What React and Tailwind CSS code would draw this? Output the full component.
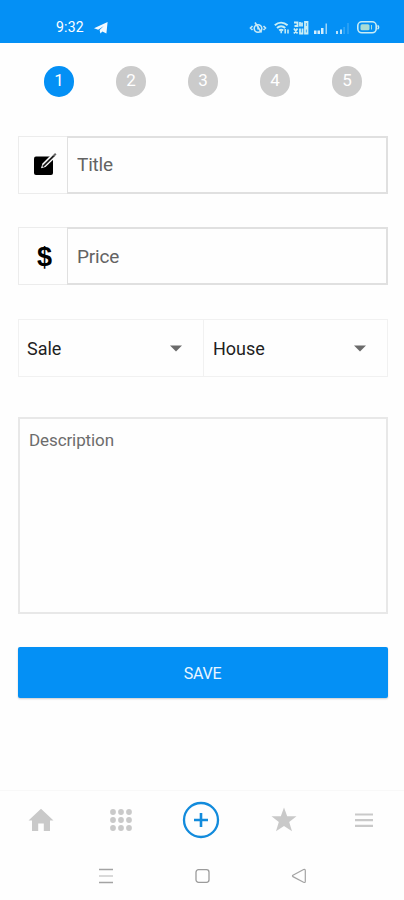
import React, { useState } from 'react';

const STEPS = [1, 2, 3, 4, 5];

const StatusBar = () => (
    <div className="h-[43px] flex-shrink-0 bg-[#0490f5] flex items-start pt-[19px] pl-[56px] pr-[24px] text-white">
        <span className="w-[29px] text-[14px] leading-[17px] tracking-[0.2px] whitespace-nowrap">9:32</span>
        <svg className="ml-[9px] mt-[3px]" width="15" height="12" viewBox="0 0 15 12" fill="#f2f9ff">
            <path d="M0 6.2 13.6 0 12.4 11.5 8.4 9.4 6.4 11.4 5.6 8 9.8 4 4.2 7.8Z" />
        </svg>

        <div className="ml-auto flex items-start">
            {/* Vibrate */}
            <svg className="mt-[2px]" width="18" height="14" viewBox="0 0 18 14" fill="none" stroke="#c9e9f5" strokeWidth="1.6">
                <path d="M3.5 5 1.5 7l2 2M14.5 5l2 2-2 2" />
                <circle cx="9" cy="7.5" r="3.8" />
                <path d="M6 1.5 12.5 11.5M9 5v3.5" />
            </svg>
            {/* Wifi */}
            <svg className="ml-[7px] mt-[2px]" width="16" height="14" viewBox="0 0 16 14" fill="none" stroke="#c9eef5" strokeWidth="2">
                <path d="M.8 4.2C4.6.8 9.6.8 13.6 4.2M3 7c2.4-2.2 5.8-2.2 8.2 0M5.2 9.6c1.2-1.1 2.8-1.1 4 0" />
                <path d="M11.2 8v4.5M14 8.5v4M7.2 10v2.2" strokeWidth="1.5" />
            </svg>
            {/* Network speed */}
            <svg className="ml-[3px] mt-[2px]" width="16" height="14" viewBox="0 0 16 14" fill="none" stroke="#c9eef5" strokeWidth="1.8">
                <path d="M1 1.5h3.5V5H1.5M7 1v4.5M9 1.5v4M1 7.5l3.5 5M4.5 7.5 1 12.5M7 7.5v5h2.5v-5M12 1h2.5v5H12zM12 7.5h2.5v5H12z" />
            </svg>
            <svg className="ml-[5px] mt-[3px]" width="16" height="12" viewBox="0 0 16 12">
                <path d="M0 8.5h2.5V12H0zM3.5 8.5H6V12H3.5zM7 6h2.500v6H7z" fill="#d5eefc" />
                <path d="M11.5 1.5H13V12h-1.5z" fill="#9dd4f8" />
            </svg>
            <svg className="ml-[5px] mt-[3px]" width="16" height="12" viewBox="0 0 16 12">
                <path d="M1 9h2v3H1zM5 7.5h2V12H5z" fill="#b9e2fb" />
                <path d="M8.5 5h1.2v7H8.5zM12.5 1h1v11h-1z" fill="#48aef5" />
            </svg>
            {/* Battery */}
            <svg className="ml-[6px] mt-[2px]" width="23" height="13" viewBox="0 0 23 13" fill="none">
                <rect x=".8" y=".8" width="18.4" height="11" rx="4" stroke="#c9ecf5" strokeWidth="1.6" />
                <path d="M20.5 4.5c1.5.8 1.5 2.8 0 3.6" stroke="#c9ecf5" strokeWidth="1.5" />
                <rect x="3.5" y="3.3" width="9" height="6" rx="1.5" fill="#a9dcd6" />
                <path d="M14.5 4v4.5" stroke="#a9dcd6" />
            </svg>
        </div>
    </div>
);

const Field = ({ icon, placeholder, className }) => {
    const [value, setValue] = useState('');

    return (
        <div className="flex h-[58px]">
            <div className="w-[49px] flex-shrink-0 border border-r-0 border-[#ececec] flex items-center justify-center">
                {icon}
            </div>
            <input
                className={`flex-1 min-w-0 border-2 border-l border-[#e0e0e0] pl-[9px] text-[19px] tracking-[-0.2px] text-[#333] placeholder:text-[#636363] placeholder:opacity-100 focus:outline-none ${className}`}
                value={value}
                onChange={(e) => setValue(e.target.value)}
                placeholder={placeholder}
            />
        </div>
    );
};

const Dropdown = ({ label, className }) => (
    <button className={`flex items-center justify-between text-[18px] text-[#1f1f1f] ${className}`}>
        <span className="pt-[1px]">{label}</span>
        <svg width="12" height="7" viewBox="0 0 12 7" fill="#6b6b6b">
            <path d="M0 .5h12L6 6.5Z" />
        </svg>
    </button>
);

const EditIcon = () => (
    <svg className="ml-[3px] mt-[-3px]" width="24" height="24" viewBox="0 0 24 24">
        <rect x="1" y="4.5" width="19" height="18.5" rx="2" fill="#000" />
        <path d="M8 16.2 9.5 11.5 18.5 2.500 22.500 5.500 12.500 15Z" fill="#fff" />
        <path d="M9.8 14.6 21 3.6" stroke="#222" strokeWidth="2" />
        <path d="M20.5 4 22.8 1.8" stroke="#666" strokeWidth="2" />
    </svg>
);

const BottomNav = () => (
    <nav className="h-[60px] flex-shrink-0 border-t border-[#f8f8f8] flex items-center pb-[1px] text-[#c9c9c9]">
        <a className="w-[82px] flex justify-center">
            <svg width="26" height="24" viewBox="0 0 26 24" fill="currentColor">
                <path d="M13 .8 25.5 12.5H22V23h-6.2v-7.5h-5.6V23H4V12.5H.5Z" />
            </svg>
        </a>
        <a className="w-[78px] flex justify-center">
            <svg width="24" height="24" viewBox="0 0 24 24" fill="currentColor">
                {[4, 12, 20].map(cy => [4, 12, 20].map(cx => (
                    <circle key={`${cx}-${cy}`} cx={cx} cy={cy} r="2.9" />
                )))}
            </svg>
        </a>
        <a className="w-[82px] flex justify-center">
            <svg width="38" height="38" viewBox="0 0 38 38" fill="none" stroke="#128bdc">
                <circle cx="19" cy="19" r="17" strokeWidth="2.3" />
                <path d="M19 12v14M12 19h14" strokeWidth="2.6" />
            </svg>
        </a>
        <a className="w-[84px] flex justify-center">
            <svg width="26" height="26" viewBox="0 0 26 26" fill="currentColor">
                <path d="M13 .5l3.2 8.7h9.3l-7.3 5.8 2.8 9.3L13 19 5 24.3l2.8-9.3L.5 9.2h9.3Z" />
            </svg>
        </a>
        <a className="w-[76px] flex justify-center">
            <svg width="18" height="16" viewBox="0 0 18 16" stroke="currentColor" strokeWidth="2.2">
                <path d="M0 2.5h18M0 8.2h18M0 13.9h18" />
            </svg>
        </a>
    </nav>
);

const SystemNav = () => (
    <div className="h-[50px] flex-shrink-0 flex items-center justify-between pt-[2px] pl-[98px] pr-[97px]">
        <svg width="16" height="16" viewBox="0 0 16 16" stroke="#a3a3a3" strokeWidth="1.3">
            <path d="M1 1.5h14M1 14.5h14" />
            <path d="M1 8h14" stroke="#c4c4c4" />
        </svg>
        <svg width="16" height="16" viewBox="0 0 16 16" fill="none" stroke="#9b9b9b" strokeWidth="1.3">
            <rect x="1" y="1.7" width="13" height="12.6" rx="2.5" />
        </svg>
        <svg width="16" height="16" viewBox="0 0 16 16" fill="none" stroke="#a3a3a3" strokeWidth="1.2" strokeLinejoin="round">
            <path d="M1.9 7.2 12.6 1.5Q14.3 1 14.3 2.8V13.2Q14.3 15 12.6 14.3L1.9 8.6Q1 7.9 1.9 7.2Z" />
        </svg>
    </div>
);

export default function App() {
    const [step, setStep] = useState(1);

    return (
        <div className="w-full h-[900px] flex flex-col bg-[#fefefe] font-[Roboto,sans-serif] overflow-hidden">
            <StatusBar />

            {/* Steps */}
            <div className="flex justify-between pl-[44px] pr-[42px] pt-[23px]">
                {STEPS.map(n => (
                    <button
                        key={n}
                        onClick={() => setStep(n)}
                        className={`w-[30px] h-[31px] rounded-full pb-[2px] flex items-center justify-center text-[17px] text-white ${n === step ? 'bg-[#0490f5]' : 'bg-[#cbcbcb]'}`}
                    >
                        {n}
                    </button>
                ))}
            </div>

            <div className="flex flex-col pt-[39px] pl-[18px] pr-[16px]">
                <Field icon={<EditIcon />} placeholder="Title" className="pt-[1px]" />
                <div className="h-[33px]" />
                <Field
                    icon={<span className="ml-[3px] mt-[2px] text-[27px] leading-none font-bold text-black font-['Liberation_Sans',sans-serif]">$</span>}
                    placeholder="Price"
                    className="pt-[3px]"
                />

                {/* Type selects */}
                <div className="mt-[34px] h-[58px] flex border border-[#f1f1f1]">
                    <Dropdown label="Sale" className="w-[185px] border-r border-[#f1f1f1] pl-[8px] pr-[21px]" />
                    <Dropdown label="House" className="flex-1 pl-[9px] pr-[21px]" />
                </div>

                <textarea
                    className="mt-[40px] h-[197px] block resize-none border-2 border-[#e8e8e8] pl-[9px] pt-[9px] text-[17px] leading-[24px] tracking-[-0.1px] text-[#333] placeholder:text-[#6c6c6c] placeholder:opacity-100 focus:outline-none"
                    placeholder="Description"
                />

                <button className="mt-[33px] h-[51px] rounded-[2px] bg-[#0490f5] text-[16px] tracking-[-0.2px] text-[#eaf6ff] pt-[2px] pr-[1px] shadow-[0_1px_2px_rgba(0,0,0,0.2)]">
                    SAVE
                </button>
            </div>

            <div className="flex-1" />
            <BottomNav />
            <SystemNav />
        </div>
    );
}
